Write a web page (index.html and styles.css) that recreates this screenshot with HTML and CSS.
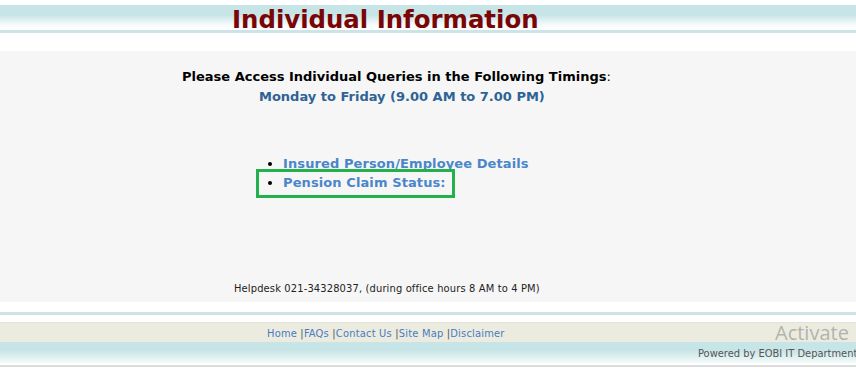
FILE: index.html
```html
<!DOCTYPE html>
<html>
<head>
<meta charset="utf-8">
<link rel="stylesheet" href="styles.css">
</head>
<body>
<div class="top-gap"></div>
<div class="banner"><h1 class="title">Individual Information</h1></div>
<div class="rule"></div>
<div class="gap-18"></div>
<div class="main">
  <p class="timing-head">Please Access Individual Queries in the Following Timings<span class="colon">:</span></p>
  <p class="timing-days">Monday to Friday (9.00 AM to 7.00 PM)</p>
  <ul class="links">
    <li><a href="#">Insured Person/Employee Details</a></li>
    <li class="boxed"><a href="#">Pension Claim Status:</a></li>
  </ul>
  <p class="helpdesk">Helpdesk 021-34328037, (during office hours 8 AM to 4 PM)</p>
</div>
<div class="gap-10"></div>
<div class="rule"></div>
<div class="gap-7"></div>
<div class="footer-nav">
  <a href="#">Home</a> |<a href="#">FAQs</a> |<a href="#">Contact Us</a> |<a href="#">Site Map</a> |<a href="#">Disclaimer</a>
  <span class="wm-big">Activate</span>
</div>
<div class="footer-band">
  <span class="powered">Powered by EOBI IT Department</span>
</div>
<div class="footer-line"></div>
</body>
</html>
```
FILE: styles.css
```css
html, body { margin: 0; padding: 0; background: #ffffff; overflow: hidden; }
body { width: 856px; height: 368px; font-family: "DejaVu Sans", Verdana, sans-serif; }

.top-gap { height: 5px; }
.banner {
  height: 25px;
  background: linear-gradient(to bottom, #c7e4e7 0px, #c7e4e7 10px, #dbeef0 14px, #f6fbfb 20px, #ffffff 25px);
}
.title {
  margin: 0;
  padding-left: 232px;
  padding-top: 2px;
  font-family: "DejaVu Sans", sans-serif;
  font-weight: bold;
  font-size: 24.4px;
  line-height: 25px;
  height: 25px;
  box-sizing: border-box;
  color: #7a0505;
  white-space: nowrap;
}
.rule { height: 3px; background: #cfe3e6; }
.gap-18 { height: 18px; }
.gap-10 { height: 10px; }
.gap-7 { height: 7px; }

.main {
  height: 251px;
  background: #f6f6f6;
  display: flex;
  flex-direction: column;
  box-sizing: border-box;
  padding-top: 17px;
}
.timing-head {
  margin: 0;
  padding-left: 182px;
  font-weight: bold;
  font-size: 13px;
  line-height: 17px;
  color: #000;
  white-space: nowrap;
}
.colon { font-weight: normal; }
.timing-days {
  margin: 3px 0 0;
  padding-left: 259px;
  font-weight: bold;
  font-size: 13px;
  line-height: 17px;
  color: #2e6395;
  white-space: nowrap;
}
.links {
  margin: 49px 0 0;
  padding: 0 0 0 283px;
  font-size: 13px;
  line-height: 19px;
}
.links li { font-weight: bold; }
.links a { color: #4a86c9; text-decoration: none; white-space: nowrap; letter-spacing: 0.1px; }
.boxed { position: relative; }
.boxed::after {
  content: "";
  position: absolute;
  left: -27px;
  top: -4px;
  width: 199px;
  height: 29px;
  box-sizing: border-box;
  border: 3px solid #22b14c;
}
.helpdesk {
  margin: auto 0 0;
  padding: 0 0 6px 234px;
  font-family: "DejaVu Sans Condensed", "DejaVu Sans", sans-serif;
  font-size: 11px;
  line-height: 14px;
  letter-spacing: 0.15px;
  color: #222;
  white-space: nowrap;
}

.footer-nav {
  position: relative;
  height: 20px;
  background: #ebebdf;
  border-top: 1px solid #e2e2d6;
  box-sizing: border-box;
  padding-left: 267px;
  font-family: "DejaVu Sans Condensed", "DejaVu Sans", sans-serif;
  font-size: 11px;
  line-height: 21px;
  letter-spacing: 0.2px;
  color: #555;
  white-space: nowrap;
}
.footer-nav a { color: #4a7bbf; text-decoration: none; }
.wm-big {
  position: absolute;
  left: 775px;
  top: -2px;
  font-family: "Open Sans", "DejaVu Sans", sans-serif;
  font-size: 20px;
  line-height: 24px;
  letter-spacing: 0;
  color: rgba(140,140,140,0.6);
}
.footer-band {
  height: 21px;
  background: linear-gradient(to bottom, #c7e4e7 0px, #c7e4e7 8px, #dcefef 14px, #f3fafa 21px);
  box-sizing: border-box;
  padding-left: 698px;
  padding-top: 2px;
  font-family: "DejaVu Sans Condensed", "DejaVu Sans", sans-serif;
  font-size: 11px;
  line-height: 19px;
  white-space: nowrap;
}
.powered { color: #555; }
.footer-line { height: 2px; margin-top: 2px; background: #dcdcdc; }
```
